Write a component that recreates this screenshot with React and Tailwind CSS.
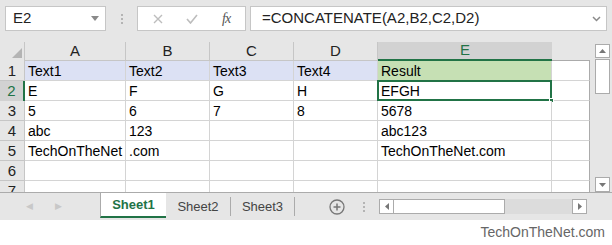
import React from 'react';

const cols = [
  { key: 'A', w: 'w-[101px]' },
  { key: 'B', w: 'w-[84px]' },
  { key: 'C', w: 'w-[84px]' },
  { key: 'D', w: 'w-[84px]' },
  { key: 'E', w: 'w-[174px]' },
];

const rows = [
  ['Text1', 'Text2', 'Text3', 'Text4', 'Result'],
  ['E', 'F', 'G', 'H', 'EFGH'],
  ['5', '6', '7', '8', '5678'],
  ['abc', '123', '', '', 'abc123'],
  ['TechOnTheNet', '.com', '', '', 'TechOnTheNet.com'],
  ['', '', '', '', ''],
  ['', '', '', '', ''],
];

const Dots = () => (
  <div className="flex flex-col gap-[2px] items-center">
    <span className="w-[2px] h-[2px] bg-[#b4b4b4]" />
    <span className="w-[2px] h-[2px] bg-[#b4b4b4]" />
    <span className="w-[2px] h-[2px] bg-[#b4b4b4]" />
  </div>
);

const FormulaBar = () => (
  <div className="flex items-center h-[25px] mt-[6px] px-[5px]">
    <div className="flex items-center w-[101px] h-full bg-white border border-[#c6c6c6] pl-[7px] pr-[6px] text-[15px] text-[#222]">
      <span className="flex-1">E2</span>
      <svg width="8" height="5" viewBox="0 0 8 5"><path d="M0 0h8L4 5z" fill="#8a8a8a" /></svg>
    </div>
    <div className="w-[31px] flex justify-center"><Dots /></div>
    <div className="flex items-center w-[109px] h-full bg-white border border-[#c6c6c6]">
      <svg className="ml-[15px]" width="10" height="10" viewBox="0 0 10 10">
        <path d="M1 1l8 8M9 1l-8 8" stroke="#bdbdbd" strokeWidth="1.4" />
      </svg>
      <svg className="ml-[23px]" width="12" height="10" viewBox="0 0 12 10">
        <path d="M1 5l3.5 4L11 1" stroke="#bdbdbd" strokeWidth="1.6" fill="none" />
      </svg>
      <span className="ml-[24px] font-['Liberation_Serif',serif] italic text-[14px] text-[#555] tracking-[-1px]">fx</span>
    </div>
    <div className="flex items-center flex-1 h-full ml-[4px] bg-white border border-[#c6c6c6] pl-[11px] pr-[5px] text-[15px] text-[#222]">
      <span className="flex-1">=CONCATENATE(A2,B2,C2,D2)</span>
      <svg width="9" height="6" viewBox="0 0 9 6"><path d="M1 1l3.5 3.5L8 1" stroke="#8a8a8a" strokeWidth="1.5" fill="none" /></svg>
    </div>
  </div>
);

const Grid = () => (
  <div className="w-[590px] h-[150px] overflow-hidden">
    <div className="flex h-[19px]">
      <div className="w-[25px] h-full flex items-end justify-end pr-[2px] pb-[3px] border-r border-[#c6c6c6]">
        <svg width="10" height="10" viewBox="0 0 10 10"><path d="M10 0v10H0z" fill="#b4b4b4" /></svg>
      </div>
      {cols.map((c) => (
        <div
          key={c.key}
          className={`${c.w} h-full flex items-center justify-center text-[15px] ${
            c.key === 'E'
              ? 'bg-[#d2d2d2] border-b-2 border-[#217346] text-[#217346]'
              : 'border-r border-b border-[#c6c6c6] text-[#222]'
          }`}
        >
          {c.key}
        </div>
      ))}
      <div className="flex-1 h-full border-b border-[#ababab]" />
    </div>
    {rows.map((r, i) => (
      <div key={i} className="flex h-[20px]">
        <div
          className={`w-[25px] h-full flex items-center justify-center pt-[1px] text-[15px] ${
            i === 1
              ? 'bg-[#d2d2d2] border-r-2 border-[#217346] text-[#217346]'
              : 'border-r border-b border-[#c6c6c6] text-[#222]'
          }`}
        >
          {i + 1}
        </div>
        {cols.map((c, j) => (
          <div
            key={c.key}
            className={`${c.w} relative h-full flex items-center pl-[3px] pt-[2px] text-[14px] text-black border-r border-b border-[#d4d4d4] whitespace-nowrap ${
              i === 0 ? (j === 4 ? 'bg-[#c6e0b4]' : 'bg-[#dce1f4]') : 'bg-white'
            }`}
          >
            {r[j]}
            {i === 1 && j === 4 && (
              <>
                <div className="absolute -left-[1px] -top-[1px] -right-[1px] -bottom-[1px] border-2 border-[#217346]" />
                <div className="absolute -right-[3px] -bottom-[3px] w-[5px] h-[5px] bg-[#217346] border border-white" />
              </>
            )}
          </div>
        ))}
        <div className="flex-1 h-full bg-white border-b border-r border-[#d4d4d4] border-r-[#ababab]" />
      </div>
    ))}
  </div>
);

const VScroll = () => (
  <div className="w-[22px] h-[150px] flex flex-col items-center pt-[2px] pl-[2px]">
    <div className="w-[15px] h-[14px] bg-white border border-[#ababab] flex items-center justify-center">
      <svg width="7" height="4" viewBox="0 0 7 4"><path d="M0 4h7L3.5 0z" fill="#777" /></svg>
    </div>
    <div className="w-[15px] h-[35px] bg-white border border-[#ababab] mt-[1px]" />
    <div className="flex-1" />
    <div className="w-[15px] h-[15px] bg-white border border-[#ababab] flex items-center justify-center">
      <svg width="7" height="4" viewBox="0 0 7 4"><path d="M0 0h7L3.5 4z" fill="#777" /></svg>
    </div>
  </div>
);

const TabBar = () => (
  <div className="flex h-[28px] border-t border-[#ababab] text-[13px]">
    <div className="w-[100px] flex items-center pl-[26px] gap-[22px] text-[#c8c8c8] text-[9px]">
      <span>◀</span>
      <span>▶</span>
    </div>
    <div className="w-[66px] h-[25px] bg-white border-l border-[#ababab] border-b-2 border-b-[#217346] flex items-center justify-center font-bold text-[#217346]">
      Sheet1
    </div>
    <div className="w-[65px] flex items-center justify-center text-[#444]">
      <span className="flex-1 text-center">Sheet2</span>
      <span className="w-px h-[19px] bg-[#ababab]" />
    </div>
    <div className="w-[64px] flex items-center justify-center text-[#444]">
      <span className="flex-1 text-center">Sheet3</span>
      <span className="w-px h-[19px] bg-[#ababab]" />
    </div>
    <div className="w-[84px] flex items-center">
      <svg className="ml-[34px]" width="16" height="16" viewBox="0 0 16 16">
        <circle cx="8" cy="8" r="7" stroke="#777" strokeWidth="1.3" fill="none" />
        <path d="M8 4.5v7M4.5 8h7" stroke="#777" strokeWidth="1.5" />
      </svg>
      <div className="ml-[18px]"><Dots /></div>
    </div>
    <div className="flex items-center h-full">
      <div className="w-[15px] h-[15px] bg-white border border-[#ababab] flex items-center justify-center">
        <svg width="4" height="7" viewBox="0 0 4 7"><path d="M4 0v7L0 3.5z" fill="#777" /></svg>
      </div>
      <div className="w-[111px] h-[15px] bg-white border border-[#ababab] border-l-0" />
      <div className="w-[67px] h-[15px] bg-[#dcdcdc]" />
      <div className="w-[15px] h-[15px] bg-white border border-[#ababab] flex items-center justify-center">
        <svg width="4" height="7" viewBox="0 0 4 7"><path d="M0 0v7L4 3.5z" fill="#777" /></svg>
      </div>
    </div>
  </div>
);

export default function App() {
  return (
    <div className="w-[612px] h-[245px] bg-white font-['Liberation_Sans',Arial,sans-serif] overflow-hidden">
      <div className="bg-[#e6e6e6] h-[220px] flex flex-col">
        <FormulaBar />
        <div className="flex mt-[11px]">
          <Grid />
          <VScroll />
        </div>
        <TabBar />
      </div>
      <div className="h-[25px] flex items-center justify-end pr-[7px] text-[14px] text-[#666]">
        TechOnTheNet.com
      </div>
    </div>
  );
}
